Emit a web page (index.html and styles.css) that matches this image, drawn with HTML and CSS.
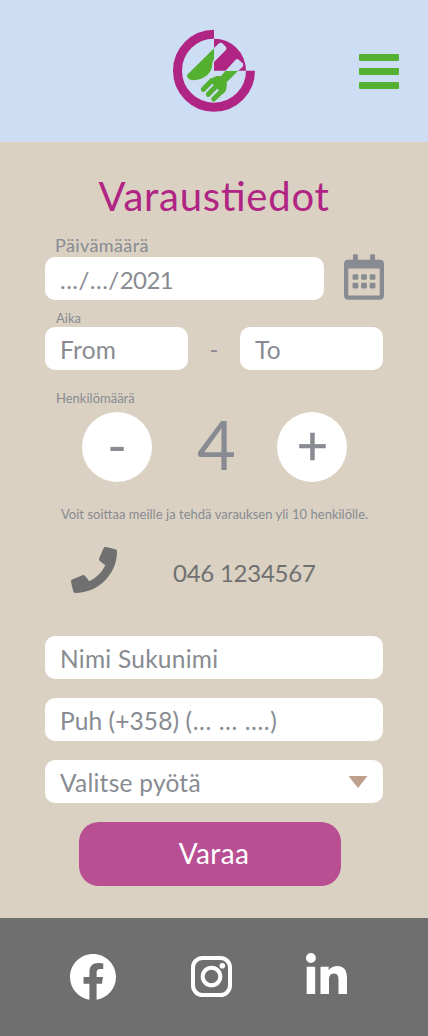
FILE: index.html
```html
<!DOCTYPE html>
<html lang="fi">
<head>
<meta charset="utf-8">
<title>Varaustiedot</title>
<link rel="stylesheet" href="styles.css">
</head>
<body>
<header class="header">
  <svg class="logo" viewBox="0 0 300 300">
    <path class="logo-ring" d="M150 42.500A109.500 109.500 0 1 0 259.500 152"/>
    <path class="logo-wedge" d="M150 56A96 96 0 0 1 246 152H150Z"/>
    <path class="logo-handle" d="M150 84L165 70Q170 66 175 70L186 81Q190 86 185 91L150 126Z"/>
    <path class="logo-handle" d="M184 153L214 120Q219 115 224 119L236 130Q240 135 236 140L222 153Z"/>
    <path class="logo-green" d="M150 85V118Q144 124 145 132C145 163 112 184 82 180Q69 177 69 165Z"/>
    <path class="logo-green" d="M184 153H222L188 187C190 205 184 216 176 223L146 192L134 186C147 167 163 166 171 169Z"/>
    <path class="logo-tines" d="M118 208L143 182M133 223L158 197M149 237L179 208"/>
  </svg>
  <button class="menu" aria-label="Valikko"><span></span><span></span><span></span></button>
</header>
<main class="main">
  <h1 class="title">Varaus<span class="ligature">ti</span>edot</h1>
  <div class="label label-date">Päivämäärä</div>
  <div class="row">
    <div class="field field-date"><span class="dots">.../.../</span><span class="year">2021</span></div>
    <svg class="calendar" viewBox="0 0 448 512"><path fill-rule="evenodd" d="M112 0h32q12 0 12 12v52h136V12q0-12 12-12h32q12 0 12 12v52h52q48 0 48 48v352q0 48-48 48H48q-48 0-48-48V112q0-48 48-48h52V12q0-12 12-12ZM48 160v298q0 6 6 6h340q6 0 6-6V160Z"/><path d="M108 224h40q12 0 12 12v40q0 12-12 12h-40q-12 0-12-12v-40q0-12 12-12Zm96 0h40q12 0 12 12v40q0 12-12 12h-40q-12 0-12-12v-40q0-12 12-12Zm96 0h40q12 0 12 12v40q0 12-12 12h-40q-12 0-12-12v-40q0-12 12-12ZM108 320h40q12 0 12 12v40q0 12-12 12h-40q-12 0-12-12v-40q0-12 12-12Zm96 0h40q12 0 12 12v40q0 12-12 12h-40q-12 0-12-12v-40q0-12 12-12Zm96 0h40q12 0 12 12v40q0 12-12 12h-40q-12 0-12-12v-40q0-12 12-12Z"/></svg>
  </div>
  <div class="label label-time">Aika</div>
  <div class="row row-time">
    <div class="field field-time">From</div>
    <span class="dash">-</span>
    <div class="field field-time">To</div>
  </div>
  <div class="label label-count">Henkilömäärä</div>
  <div class="counter">
    <button class="round minus">-</button>
    <span class="count">4</span>
    <button class="round plus">+</button>
  </div>
  <p class="note">Voit soittaa meille ja tehdä varauksen yli 10 henkilölle.</p>
  <div class="call">
    <svg class="phone" viewBox="0 0 512 512"><path d="M493.400 24.600l-104-24c-11.300-2.600-22.900 3.300-27.500 13.900l-48 112c-4.200 9.800-1.400 21.300 6.900 28l60.600 49.600c-36 76.700-98.900 140.500-177.200 177.200l-49.600-60.600c-6.800-8.300-18.200-11.100-28-6.900l-112 48C3.900 366.500-2 378.100.600 389.400l24 104C27.100 504.200 36.700 512 48 512c256.100 0 464-207.500 464-464 0-11.200-7.700-20.900-18.600-23.400z"/></svg>
    <span class="number">046 1234567</span>
  </div>
  <div class="stack">
    <div class="field">Nimi Sukunimi</div>
    <div class="field field-tel">Puh (+358) <span class="dots">(... ... ....)</span></div>
    <div class="field select">Valitse pyötä<svg class="arrow" viewBox="0 0 20 12"><path d="M.5 0h19L10 12Z"/></svg></div>
  </div>
  <button class="submit">Varaa</button>
</main>
<footer class="footer">
  <svg class="facebook" viewBox="8 8 496 496"><path d="M504 256C504 119 393 8 256 8S8 119 8 256c0 123.800 90.700 226.400 209.300 245V327.700h-63V256h63v-54.600c0-62.200 37-96.500 93.700-96.500 27.100 0 55.500 4.800 55.500 4.800v61h-31.300c-30.800 0-40.400 19.100-40.400 38.700V256h68.800l-11 71.700h-57.800V501C413.300 482.400 504 379.800 504 256z"/></svg>
  <svg class="instagram" viewBox="0 0 41 41"><rect x="2" y="2" width="37" height="37" rx="9.500"/><circle cx="20.500" cy="20.500" r="8.800"/><circle class="dot" cx="31.300" cy="9.700" r="2.800"/></svg>
  <svg class="linkedin" viewBox="0 0 448 448"><path d="M100.300 448H7.400V148.900h92.900zM53.800 108.100C24.100 108.100 0 83.500 0 53.800a53.800 53.800 0 0 1 107.600 0c0 29.700-24.100 54.300-53.800 54.300zM447.900 448h-92.700V302.400c0-34.700-.7-79.200-48.300-79.200-48.300 0-55.700 37.700-55.700 76.700V448h-92.800V148.900h89.100v40.800h1.300c12.400-23.500 42.700-48.300 87.900-48.300 94 0 111.300 61.900 111.300 142.300V448z"/></svg>
</footer>
</body>
</html>
```
FILE: styles.css
```css
* { box-sizing: border-box; }
body { margin: 0; width: 428px; font-family: Lato, "Open Sans", sans-serif; color: #888b92; background: #dad1c2; }
button { border: 0; padding: 0; font-family: inherit; color: inherit; }
svg { display: block; fill: currentColor; flex: none; }

.header { height: 142px; background: #cdddf4; display: flex; justify-content: space-between; align-items: flex-start; padding: 20px 29px 0 164px; }
.logo { width: 100px; height: 100px; }
.logo-ring { fill: none; stroke: #b02484; stroke-width: 27; }
.logo-wedge { fill: #b02484; }
.logo-handle { fill: #cdddf4; }
.logo-green { fill: #54b030; }
.logo-tines { fill: none; stroke: #54b030; stroke-width: 15; stroke-linecap: round; }
.menu { width: 40px; margin-top: 34px; background: none; display: flex; flex-direction: column; gap: 7.500px; }
.menu span { height: 6.500px; border-radius: 1px; background: #54b030; }

.main { height: 776px; padding: 0 45px; display: flex; flex-direction: column; }
.title { margin: 28px 0 0; height: 51px; padding-left: 53.500px; font-size: 40px; line-height: 52px; font-weight: 400; letter-spacing: .78px; color: #b02484; white-space: nowrap; }
.ligature { letter-spacing: 0; margin-right: .75px; }

.label { padding-left: 11px; white-space: nowrap; font-size: 13px; line-height: 16px; height: 16px; }
.label-date { height: 20px; margin-top: 14px; padding-left: 10px; font-size: 18px; line-height: 21px; letter-spacing: .4px; }
.label-time { margin-top: 10px; }
.label-count { margin-top: 20px; }

.row { display: flex; height: 43px; margin-top: 2px; align-items: center; }
.row-time { margin-top: 1px; }
.field { height: 43px; flex: none; border-radius: 10px; background: #fff; padding: 2px 15px 0; display: flex; align-items: center; font-size: 24.500px; letter-spacing: .25px; white-space: pre; }
.field-date { width: 279px; padding-top: 1px; font-size: 24px; }
.field-date .dots { letter-spacing: .5px; }
.year { letter-spacing: -.55px; }
.field-tel { letter-spacing: .1px; }
.field-tel .dots { letter-spacing: .6px; }
.calendar { width: 40px; height: 46px; margin: -4px 0 0 20px; }
.field-time { width: 143px; }
.dash { width: 52px; text-align: center; font-size: 24px; }

.counter { display: flex; height: 70px; margin-top: 6px; padding: 0 36px 0 37px; justify-content: space-between; align-items: center; }
.round { width: 70px; height: 70px; border-radius: 50%; background: #fff; font-size: 54px; line-height: 66px; }
.minus { padding-bottom: 4px; }
.plus { font-size: 54px; padding: 0 0 9px 1px; -webkit-text-stroke: .5px currentColor; }
.count { font-size: 67px; line-height: 70px; padding: 0 0 7px 4px; }
.note { margin: 24px 0 0; padding-left: 16px; height: 16px; font-size: 13px; line-height: 16px; word-spacing: .15px; white-space: nowrap; }

.call { display: flex; align-items: center; height: 48px; margin-top: 24px; padding-left: 26px; color: #707070; font-size: 24px; letter-spacing: -.25px; }
.phone { width: 46px; height: 46px; }
.number { margin-left: 56px; padding-top: 4px; }

.stack { display: flex; flex-direction: column; gap: 19px; margin-top: 42px; }
.select { justify-content: space-between; }
.arrow { width: 20px; height: 12px; margin-top: -2px; color: #bfa08c; }
.submit { width: 262px; height: 64px; margin: 19px 0 0 34px; padding: 0 0 3px 8px; border-radius: 20px; background: #b94f93; color: #fff; font-size: 28px; letter-spacing: .4px; }

.footer { height: 118px; background: #6f6f6f; color: #fff; display: flex; align-items: flex-start; padding-left: 70px; }
.facebook { width: 46px; height: 46px; margin-top: 35.500px; }
.instagram { width: 41px; height: 41px; margin: 38px 0 0 75px; fill: none; stroke: #fff; stroke-width: 4; }
.instagram .dot { fill: #fff; stroke: none; }
.linkedin { width: 41px; height: 41px; margin: 35px 0 0 74px; }
```
